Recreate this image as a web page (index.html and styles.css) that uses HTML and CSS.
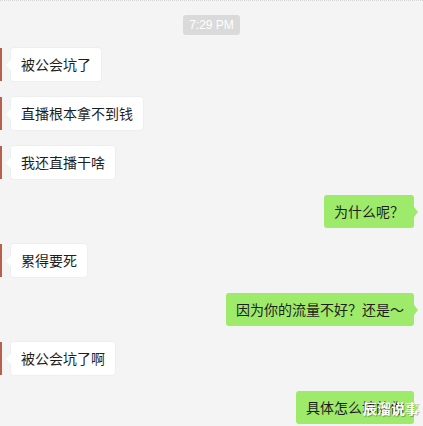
FILE: index.html
```html
<!DOCTYPE html>
<html lang="zh">
<head>
<meta charset="utf-8">
<link rel="stylesheet" href="styles.css">
</head>
<body>
<div class="chat">
  <div class="time-row"><span class="time">7:29 PM</span></div>
  <div class="row left"><div class="avatar"></div><div class="bubble">被公会坑了</div></div>
  <div class="row left"><div class="avatar"></div><div class="bubble">直播根本拿不到钱</div></div>
  <div class="row left"><div class="avatar"></div><div class="bubble">我还直播干啥</div></div>
  <div class="row right"><div class="bubble">为什么呢？</div></div>
  <div class="row left"><div class="avatar"></div><div class="bubble">累得要死</div></div>
  <div class="row right"><div class="bubble">因为你的流量不好？还是～</div></div>
  <div class="row left"><div class="avatar"></div><div class="bubble">被公会坑了啊</div></div>
  <div class="row right"><div class="bubble">具体怎么填的你<span class="watermark">辰溜说事</span></div></div>
</div>
</body>
</html>
```

FILE: styles.css
```css
html, body {
  margin: 0;
  padding: 0;
  background: #f4f4f4;
}
body {
  font-family: "Noto Sans CJK SC", "Liberation Sans", sans-serif;
  color: #1e1e1e;
  height: 426px;
  overflow: hidden;
  border-top: 1px dotted #d6d6d6;
  box-sizing: border-box;
}
.chat {
  display: flex;
  flex-direction: column;
  gap: 16px;
  padding-top: 14px;
}
.time-row {
  display: flex;
  justify-content: center;
  margin-bottom: -3px;
}
.time {
  background: #dadada;
  color: #ffffff;
  font-family: "Liberation Sans", sans-serif;
  font-size: 12px;
  line-height: 20px;
  height: 20px;
  padding: 0 6px;
  border-radius: 3px;
}
.row {
  display: flex;
  align-items: stretch;
  height: 33px;
}
.row.right {
  justify-content: flex-end;
  padding-right: 9px;
}
.avatar {
  width: 2px;
  background: #b7614a;
  margin-right: 9px;
}
.bubble {
  position: relative;
  font-size: 14px;
  line-height: 33px;
  padding: 0 10px;
  border-radius: 3px;
  white-space: nowrap;
}
.left .bubble {
  background: #ffffff;
  box-shadow: 0 0 0 0.5px #e8e8e8;
}
.left .bubble::before {
  content: "";
  position: absolute;
  left: -5px;
  top: 12px;
  border-top: 5px solid transparent;
  border-bottom: 5px solid transparent;
  border-right: 5px solid #ffffff;
}
.right .bubble {
  background: #9eea6a;
}
.right .bubble::after {
  content: "";
  position: absolute;
  right: -4px;
  top: 12px;
  border-top: 5px solid transparent;
  border-bottom: 5px solid transparent;
  border-left: 4px solid #9eea6a;
}
.watermark {
  position: absolute;
  right: -5px;
  top: 8px;
  font-size: 14px;
  line-height: 18px;
  font-weight: bold;
  color: #ffffff;
  text-shadow: 1px 1px 1px rgba(0,0,0,0.3);
}
```
